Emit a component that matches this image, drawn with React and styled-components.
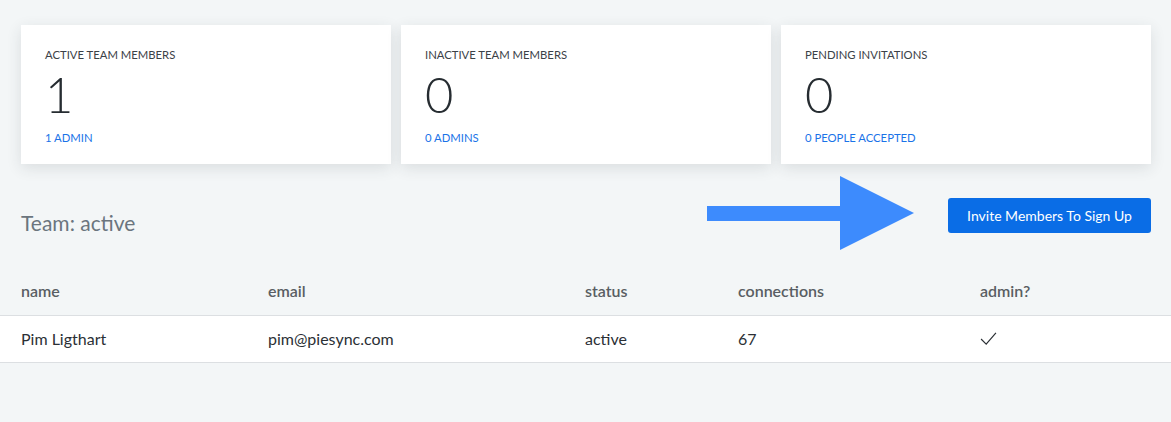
import React from "react";
import styled, { createGlobalStyle } from "styled-components";

const stats = [
  { title: "Active team members", value: 1, link: "1 admin" },
  { title: "Inactive team members", value: 0, link: "0 admins" },
  { title: "Pending invitations", value: 0, link: "0 people accepted" },
];

const members = [
  { name: "Pim Ligthart", email: "pim@piesync.com", status: "active", connections: 67, admin: true },
];

export default function App() {
  return (
    <>
      <GlobalStyles />
      <Page>
        <Cards>
          {stats.map((s) => (
            <Card key={s.title}>
              <CardTitle>{s.title}</CardTitle>
              <CardValue>{s.value}</CardValue>
              <CardLink href="#">{s.link}</CardLink>
            </Card>
          ))}
        </Cards>

        <TeamBar>
          <TeamTitle>Team: active</TeamTitle>
          <Arrow viewBox="0 0 207 74" aria-hidden="true">
            <rect x="0" y="30" width="134" height="15" fill="#3d8bfd" />
            <polygon points="133,0 207,37 133,74" fill="#3d8bfd" />
          </Arrow>
          <InviteButton>Invite Members To Sign Up</InviteButton>
        </TeamBar>

        <Table>
          <HeadRow>
            <HeadCell>name</HeadCell>
            <HeadCell>email</HeadCell>
            <HeadCell>status</HeadCell>
            <HeadCell>connections</HeadCell>
            <HeadCell>admin?</HeadCell>
          </HeadRow>
          {members.map((m) => (
            <Row key={m.email}>
              <Cell>{m.name}</Cell>
              <Cell>{m.email}</Cell>
              <Cell>{m.status}</Cell>
              <Cell>{m.connections}</Cell>
              <Cell>{m.admin ? <Check viewBox="0 0 18 14"><path d="M1 7.5 L6.5 13 L17 1" /></Check> : null}</Cell>
            </Row>
          ))}
        </Table>
      </Page>
    </>
  );
}

const GlobalStyles = createGlobalStyle`
  html, body {
    margin: 0;
    padding: 0;
    background: #f3f6f7;
    font-family: Lato, "Open Sans", sans-serif;
  }
`;

const Page = styled.div`
  min-height: 422px;
  background: #f3f6f7;
  padding-top: 25px;
  box-sizing: border-box;
`;

const Cards = styled.div`
  display: grid;
  grid-template-columns: repeat(3, 370px);
  gap: 10px;
  padding: 0 20px 0 21px;
`;

const Card = styled.div`
  background: #fff;
  height: 139px;
  box-sizing: border-box;
  padding: 22px 24px 0;
  box-shadow: 0 4px 14px rgba(40, 50, 60, 0.12);
`;

const CardTitle = styled.div`
  font-size: 11.3px;
  line-height: 16px;
  text-transform: uppercase;
  color: #3b4147;
`;

const CardValue = styled.div`
  margin-top: 6px;
  font-size: 49px;
  font-weight: 300;
  line-height: 50px;
  color: #262c31;
`;

const CardLink = styled.a`
  display: block;
  margin-top: 11px;
  font-size: 11.3px;
  line-height: 16px;
  text-transform: uppercase;
  color: #1a73e8;
  text-decoration: none;
`;

const TeamBar = styled.div`
  position: relative;
  display: flex;
  align-items: flex-end;
  justify-content: space-between;
  padding: 34px 20px 0 21px;
`;

const TeamTitle = styled.div`
  font-size: 21px;
  line-height: 20px;
  color: #6b757e;
`;

const Arrow = styled.svg`
  position: absolute;
  left: 707px;
  top: 12px;
  width: 207px;
  height: 74px;
`;

const InviteButton = styled.button`
  width: 203px;
  height: 35px;
  border: 0;
  border-radius: 3px;
  background: #0a6de6;
  color: #fff;
  font-family: Lato, sans-serif;
  font-size: 14px;
  cursor: pointer;
`;

const Table = styled.div`
  margin-top: 36px;
`;

const columns = `247px 317px 153px 242px 1fr`;

const HeadRow = styled.div`
  display: grid;
  grid-template-columns: ${columns};
  box-sizing: border-box;
  padding: 0 0 4px 21px;
  height: 47px;
  align-items: center;
  border-bottom: 1px solid #dcdfe2;
`;

const HeadCell = styled.div`
  font-size: 16px;
  font-weight: 600;
  color: #595e63;
`;

const Row = styled.div`
  display: grid;
  grid-template-columns: ${columns};
  box-sizing: border-box;
  padding: 0 0 2px 21px;
  height: 47px;
  align-items: center;
  background: #fff;
  border-bottom: 1px solid #dcdfe2;
`;

const Cell = styled.div`
  font-size: 16px;
  color: #2b3035;
  display: flex;
  align-items: center;
`;

const Check = styled.svg`
  width: 17px;
  height: 13px;
  fill: none;
  stroke: #2b3035;
  stroke-width: 1.3;
`;
